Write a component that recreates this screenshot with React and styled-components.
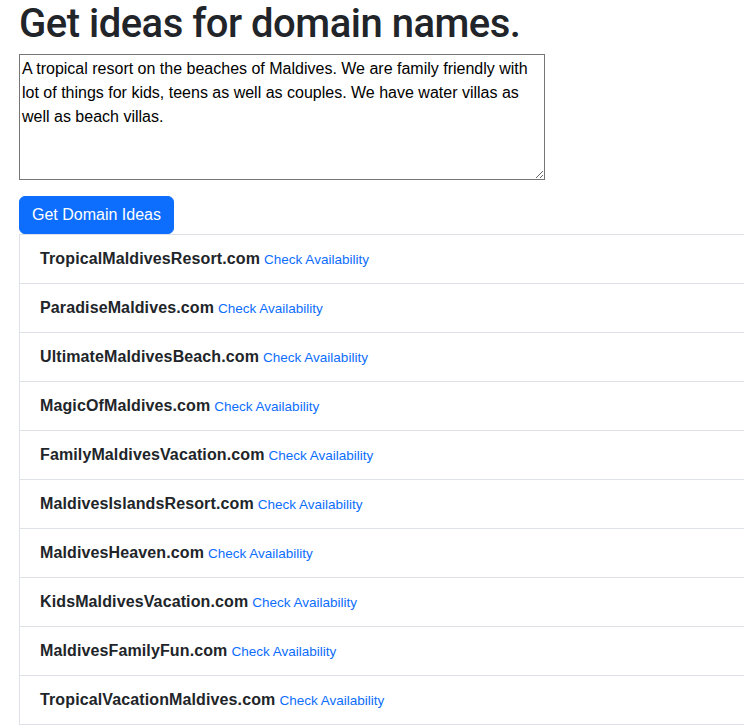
import React from 'react';
import styled, { createGlobalStyle } from 'styled-components';

const GlobalStyle = createGlobalStyle`
  html, body {
    margin: 0;
    padding: 0;
    overflow-x: hidden;
    background: #fff;
  }
  body {
    font-family: "Liberation Sans", Arial, sans-serif;
    color: #212529;
    font-size: 16px;
    line-height: 1.5;
  }
  * { box-sizing: border-box; }
`;

const Page = styled.div`
  padding: 0 0 0 19px;
  width: 744px;
  overflow: hidden;
`;

const Title = styled.h1`
  font-family: Roboto, "Liberation Sans", Arial, sans-serif;
  font-size: 40px;
  font-weight: 500;
  line-height: 48px;
  margin: 0 0 6px;
  letter-spacing: -0.5px;
`;

const Description = styled.textarea`
  display: block;
  width: 526px;
  height: 126px;
  padding: 2px 2px;
  font-family: "Liberation Sans", Arial, sans-serif;
  font-size: 16px;
  line-height: 24px;
  color: #000;
  border: 1px solid #767676;
  border-radius: 0;
  margin: 0 0 16px;
  resize: both;
`;

const Button = styled.button`
  display: block;
  font-family: "Liberation Sans", Arial, sans-serif;
  font-size: 16px;
  line-height: 24px;
  padding: 6px 12px;
  color: #fff;
  background: #0d6efd;
  border: 1px solid #0d6efd;
  border-radius: 6px;
  cursor: pointer;
`;

const List = styled.ul`
  list-style: none;
  margin: 0;
  padding: 0;
  width: 760px;
  border: 1px solid #dee2e6;
  border-bottom: 0;
`;

const Item = styled.li`
  padding: 12px 20px;
  height: 49px;
  line-height: 24px;
  border-bottom: 1px solid #dee2e6;
`;

const Domain = styled.strong`
  font-weight: 700;
  font-size: 16px;
  letter-spacing: 0.12px;
  color: #212529;
`;

const Check = styled.a`
  font-size: 13.5px;
  line-height: 1;
  color: #0d6efd;
  text-decoration: none;
  margin-left: 4px;
`;

const domains = [
  'TropicalMaldivesResort.com',
  'ParadiseMaldives.com',
  'UltimateMaldivesBeach.com',
  'MagicOfMaldives.com',
  'FamilyMaldivesVacation.com',
  'MaldivesIslandsResort.com',
  'MaldivesHeaven.com',
  'KidsMaldivesVacation.com',
  'MaldivesFamilyFun.com',
  'TropicalVacationMaldives.com',
];

export default function App() {
  return (
    <Page>
      <GlobalStyle />
      <Title>Get ideas for domain names.</Title>
      <Description
        defaultValue="A tropical resort on the beaches of Maldives. We are family friendly with lot of things for kids, teens as well as couples. We have water villas as well as beach villas."
      />
      <Button>Get Domain Ideas</Button>
      <List>
        {domains.map(d => (
          <Item key={d}>
            <Domain>{d}</Domain>
            <Check href="#">Check Availability</Check>
          </Item>
        ))}
      </List>
    </Page>
  );
}
